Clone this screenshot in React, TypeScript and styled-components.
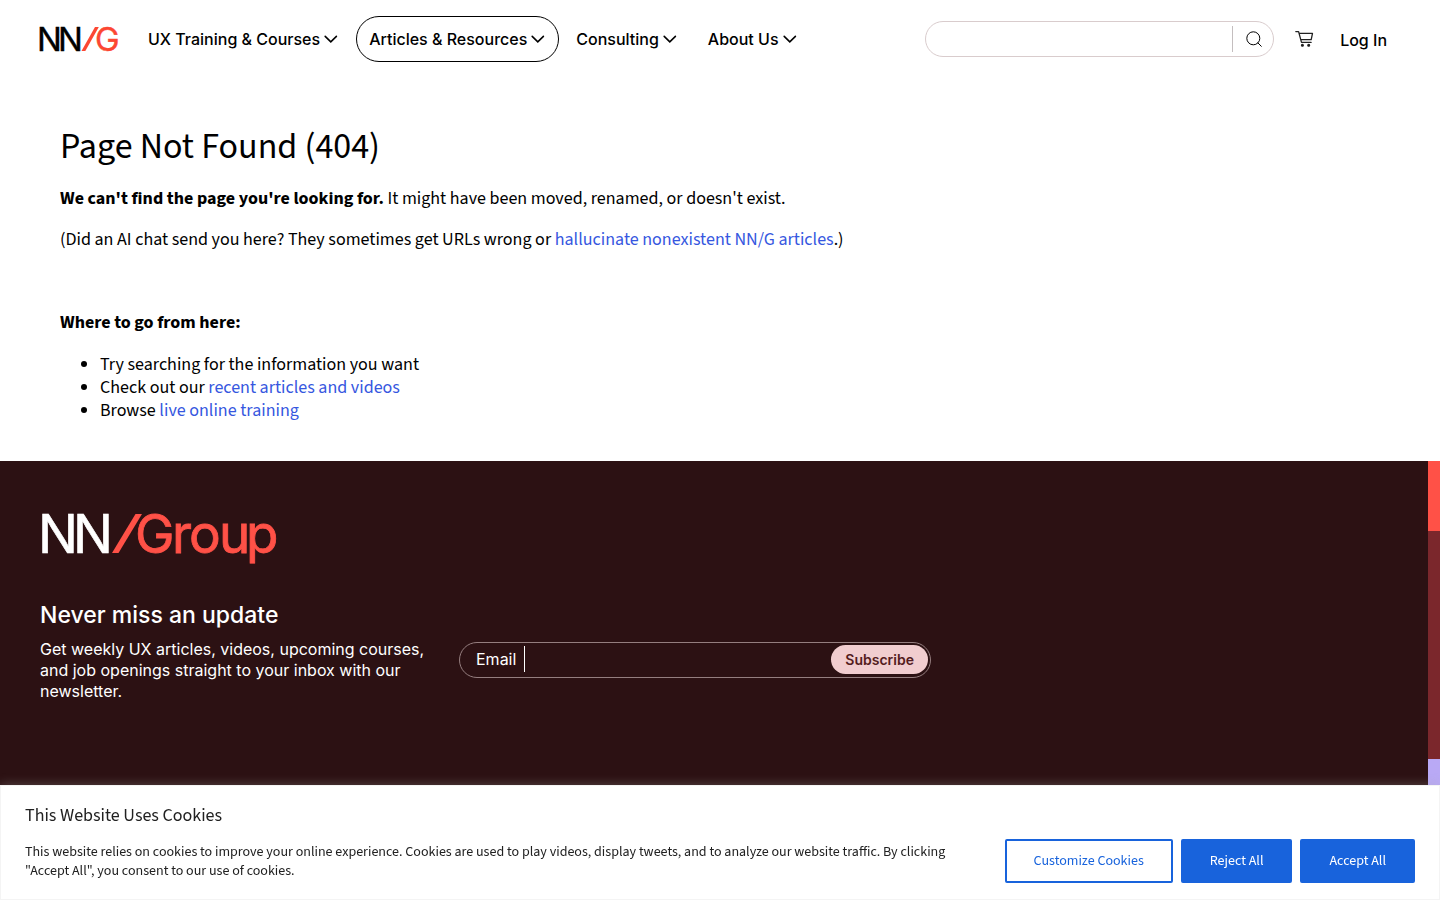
import React from "react";
import styled, { createGlobalStyle } from "styled-components";

const GlobalStyle = createGlobalStyle`
  *, *::before, *::after { box-sizing: border-box; }
  body {
    margin: 0;
    background: #fff;
    color: #000;
    font-family: "Source Sans 3", "Noto Sans CJK SC", sans-serif;
    font-size: 18px;
    line-height: 23px;
  }
  button, input { font: inherit; color: inherit; }
`;

const inter = `Inter, "Liberation Sans", sans-serif`;

const Page = styled.div`
  min-height: 100vh;
  display: flex;
  flex-direction: column;
`;

const Header = styled.header`
  display: flex;
  align-items: center;
  padding: 16px 40px 16px 36px;
  font-family: ${inter};
  font-size: 16px;
  font-weight: 500;
  line-height: 20px;
`;

const LogoLink = styled.a`
  display: block;
  height: 44px;
  margin-right: 15px;
`;

const Nav = styled.nav`
  display: flex;
  gap: 4px;
`;

const NavButton = styled.button<{ $active?: boolean }>`
  display: flex;
  align-items: center;
  gap: 3px;
  height: 46px;
  padding: 0 12px;
  border: 1px solid ${(p) => (p.$active ? "#000" : "transparent")};
  border-radius: 23px;
  background: none;
  white-space: nowrap;
`;

const Tools = styled.div`
  display: flex;
  align-items: center;
  margin-left: auto;
  padding-right: 13px;
`;

const SearchForm = styled.form`
  display: flex;
  align-items: center;
  width: 349px;
  height: 36px;
  border: 1px solid #d9cccd;
  border-radius: 18px;
`;

const SearchInput = styled.input`
  flex: 1;
  min-width: 0;
  height: 26px;
  padding: 0 16px;
  border: 0;
  border-right: 1px solid #c4bebf;
  background: none;
  outline: none;
`;

const IconButton = styled.button`
  display: grid;
  place-items: center;
  width: 40px;
  height: 34px;
  padding: 0 0 0 2px;
  border: 0;
  background: none;
`;

const CartLink = styled.a`
  display: block;
  height: 20px;
  margin: 0 25px 0 21px;
  color: #000;
`;

const LoginLink = styled.a`
  padding-top: 2px;
  color: #000;
  text-decoration: none;
`;

const Main = styled.main`
  padding: 46px 60px 39px;
`;

const Title = styled.h1`
  margin: 0 0 17px;
  font-size: 36px;
  font-weight: 400;
  line-height: 46px;
`;

const Paragraph = styled.p`
  margin: 0 0 18px;
`;

const NextSteps = styled.section`
  padding-top: 42px;
`;

const ListHeading = styled.h2`
  margin: 0 0 19px;
  font-size: 18px;
  font-weight: 700;
  line-height: 23px;
`;

const List = styled.ul`
  margin: 0;
  padding-left: 40px;
`;

const TextLink = styled.a`
  color: #3657e0;
  text-decoration: none;
`;

const Footer = styled.footer`
  flex: 1;
  display: flex;
  background: #2c1113;
  color: #fff;
  font-family: ${inter};
  font-size: 16px;
`;

const FooterBody = styled.div`
  flex: 1;
  padding: 38px 40px 198px;

  > svg {
    display: block;
    margin-left: -4px;
  }
`;

const FooterTitle = styled.h2`
  margin: 31px 0 9px;
  font-size: 23px;
  font-weight: 500;
  line-height: 30px;
`;

const SignUp = styled.div`
  display: flex;
  align-items: flex-start;
  gap: 34px;
`;

const Blurb = styled.p`
  width: 385px;
  margin: 0;
  line-height: 21px;
`;

const EmailForm = styled.form`
  display: flex;
  align-items: center;
  width: 472px;
  height: 36px;
  margin-top: 3px;
  padding: 0 2px 2px 16px;
  border: 1px solid #957e7f;
  border-radius: 18px;
`;

const EmailInput = styled.input`
  flex: 1;
  min-width: 0;
  height: 26px;
  margin-left: 8px;
  padding: 0 12px;
  border: 0;
  border-left: 1px solid #fff;
  background: none;
  outline: none;
`;

const SubscribeButton = styled.button`
  height: 29px;
  padding: 0 14px;
  border: 0;
  border-radius: 15px;
  background: #f1cdcf;
  color: #541c20;
  font-size: 14px;
  font-weight: 600;
`;

const Stripe = styled.div`
  display: flex;
  flex-direction: column;
  width: 12px;
`;

const Band = styled.div<{ $color: string; $height?: number }>`
  background: ${(p) => p.$color};
  ${(p) => (p.$height ? `height: ${p.$height}px;` : "flex: 1;")}
`;

const CookieBanner = styled.section`
  position: fixed;
  left: 0;
  right: 0;
  bottom: 0;
  padding: 18px 24px 16px;
  border: 1px solid #f4f4f4;
  background: #fff;
  box-shadow: 0 -1px 10px rgba(172, 171, 171, 0.3);
  color: #212121;
`;

const CookieTitle = styled.h2`
  margin: 0 0 12px;
  font-size: 18px;
  font-weight: 400;
  line-height: 23px;
`;

const CookieRow = styled.div`
  display: flex;
  align-items: center;
  gap: 44px;
`;

const CookieText = styled.p`
  flex: 1;
  margin: 0;
  padding-top: 2px;
  font-size: 14px;
  line-height: 19px;
`;

const CookieActions = styled.div`
  display: flex;
  gap: 8px;
`;

const CookieButton = styled.button<{ $outline?: boolean }>`
  height: 44px;
  padding: 1px 27px 0;
  border: 2px solid #1863dc;
  border-radius: 2px;
  background: ${(p) => (p.$outline ? "#fff" : "#1863dc")};
  color: ${(p) => (p.$outline ? "#1863dc" : "#fff")};
  font-size: 14px;
  font-weight: 400;
  white-space: nowrap;
`;

const Chevron = () => (
  <svg width="16" height="16" viewBox="0 0 16 16" fill="none" aria-hidden="true">
    <path d="M2.2 5.4 7.8 10.8l5.6-5.4" stroke="currentColor" strokeWidth="1.6" strokeLinecap="round" />
  </svg>
);

const HeaderLogo = () => (
  <svg width="84" height="44" viewBox="-4 -9 84 44" role="img" aria-label="NN/G" fontFamily="Inter" fontSize="33" fontWeight="400">
    <text x="-3 18" y="25" fill="#000" stroke="#000" strokeWidth=".4">NN</text>
    <path d="M41.5 25 55 1h3.8L45.3 25z" fill="#fc4732" />
    <text x="55" y="25" fill="#fc4732" stroke="#fc4732" strokeWidth=".4">G</text>
  </svg>
);

const FooterLogo = () => (
  <svg width="250" height="70" viewBox="-4 -10 250 70" role="img" aria-label="NN/Group" fontFamily="Inter" fontSize="53" fontWeight="400">
    <text x="-2 33" y="44" fill="#fff" stroke="#fff" strokeWidth=".6">NN</text>
    <path d="M72 44 95.5 5h6.5L78.5 44z" fill="#ff5147" />
    <text x="95 132 149 179 206" y="44" fill="#ff5147" stroke="#ff5147" strokeWidth=".8">Group</text>
  </svg>
);

const SearchIcon = () => (
  <svg width="16" height="16" viewBox="0 0 16 16" fill="none" stroke="#000" aria-hidden="true">
    <circle cx="7.3" cy="7.3" r="6.5" />
    <path d="m11.9 11.9 3.4 3.4" strokeLinecap="round" />
  </svg>
);

const CartIcon = () => (
  <svg width="20" height="20" viewBox="0 0 20 20" fill="none" stroke="#222" strokeWidth="1.3" aria-hidden="true">
    <path d="M.8 2.6h2.8l2.9 10.8h9.6M4.1 4.4h13.4l-1.3 6.2H5.8" strokeLinejoin="round" strokeLinecap="round" />
    <circle cx="7.4" cy="16.3" r=".9" fill="#000" />
    <circle cx="13.7" cy="16.3" r=".9" fill="#000" />
  </svg>
);

const navItems = [
  { label: "UX Training & Courses" },
  { label: "Articles & Resources", active: true },
  { label: "Consulting" },
  { label: "About Us" },
];

export default function App() {
  return (
    <Page>
      <GlobalStyle />
      <Header>
        <LogoLink href="#"><HeaderLogo /></LogoLink>
        <Nav>
          {navItems.map((item) => (
            <NavButton key={item.label} type="button" $active={item.active}>
              {item.label}
              <Chevron />
            </NavButton>
          ))}
        </Nav>
        <Tools>
          <SearchForm role="search">
            <SearchInput type="search" aria-label="Search" />
            <IconButton type="button" aria-label="Search"><SearchIcon /></IconButton>
          </SearchForm>
          <CartLink href="#" aria-label="Cart"><CartIcon /></CartLink>
          <LoginLink href="#">Log In</LoginLink>
        </Tools>
      </Header>

      <Main>
        <Title>Page Not Found (404)</Title>
        <Paragraph>
          <strong>We can't find the page you're looking for.</strong> It might have been moved, renamed, or doesn't exist.
        </Paragraph>
        <Paragraph>
          (Did an AI chat send you here? They sometimes get URLs wrong or{" "}
          <TextLink href="#">hallucinate nonexistent NN/G articles</TextLink>.)
        </Paragraph>
        <NextSteps>
          <ListHeading>Where to go from here:</ListHeading>
          <List>
            <li>Try searching for the information you want</li>
            <li>Check out our <TextLink href="#">recent articles and videos</TextLink></li>
            <li>Browse <TextLink href="#">live online training</TextLink></li>
          </List>
        </NextSteps>
      </Main>

      <Footer>
        <FooterBody>
          <FooterLogo />
          <FooterTitle>Never miss an update</FooterTitle>
          <SignUp>
            <Blurb>
              Get weekly UX articles, videos, upcoming courses, and job openings straight to your inbox with our newsletter.
            </Blurb>
            <EmailForm>
              <label htmlFor="email">Email</label>
              <EmailInput id="email" type="email" />
              <SubscribeButton type="button">Subscribe</SubscribeButton>
            </EmailForm>
          </SignUp>
        </FooterBody>
        <Stripe>
          <Band $color="#ff5147" $height={70} />
          <Band $color="#7b272c" $height={228} />
          <Band $color="#b9a9f5" />
        </Stripe>
      </Footer>

      <CookieBanner aria-label="Cookie consent">
        <CookieTitle>This Website Uses Cookies</CookieTitle>
        <CookieRow>
          <CookieText>
            This website relies on cookies to improve your online experience. Cookies are used to play videos, display tweets, and to analyze our website traffic. By clicking "Accept All", you consent to our use of cookies.
          </CookieText>
          <CookieActions>
            <CookieButton type="button" $outline>Customize Cookies</CookieButton>
            <CookieButton type="button">Reject All</CookieButton>
            <CookieButton type="button">Accept All</CookieButton>
          </CookieActions>
        </CookieRow>
      </CookieBanner>
    </Page>
  );
}
